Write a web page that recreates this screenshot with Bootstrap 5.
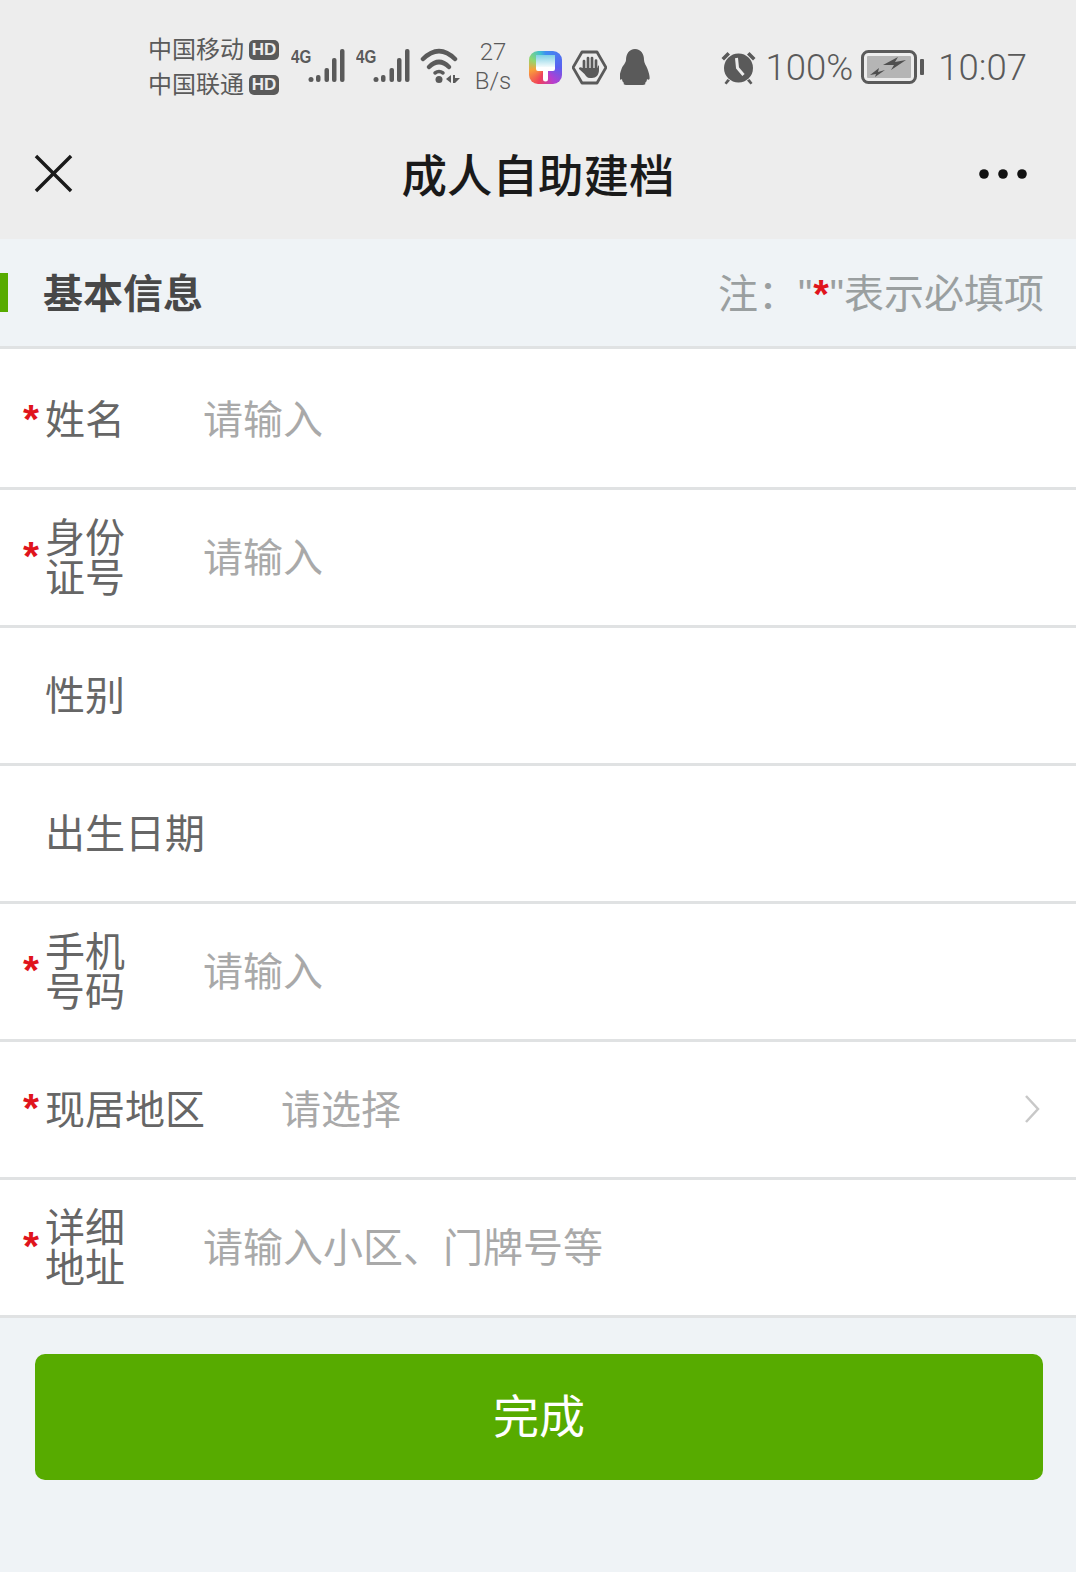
<!DOCTYPE html>
<html lang="zh-CN">
<head>
  <meta charset="UTF-8">
  <title>成人自助建档</title>
  <link href="https://cdn.jsdelivr.net/npm/bootstrap@5.3.0/dist/css/bootstrap.min.css" rel="stylesheet">
  <style>
    body { background: #eff3f6; font-family: "Liberation Sans", "Noto Sans CJK SC", sans-serif; width: 1076px; height: 1572px; overflow: hidden; }
    .top-area { background: #ededed; height: 239px; }
    .status-bar { height: 134px; padding: 0 49px 0 148px; color: #5a5a5a; }
    .carrier { font-size: 24px; line-height: 35px; width: 143px; flex-shrink: 0; }
    .carrier-row { gap: 5px; white-space: nowrap; }
    .hd-tag { background: #5a5a5a; color: #ededed; font-size: 17px; font-weight: 700; border-radius: 5px; width: 30px; height: 20px; }
    .signal-two { margin-left: 9px; }
    .wifi-icon { margin-left: 8px; }
    .speed { font-size: 24px; line-height: 29px; text-align: center; width: 50px; margin-left: 6px; font-family: Roboto, sans-serif; font-weight: 300; }
    .brush-icon { width: 33px; height: 33px; margin-left: 11px; border-radius: 9px; background: conic-gradient(from 0deg at 50% 50%, #3f8ff0 0deg, #5a5ff0 90deg, #b53fd0 150deg, #f0405a 205deg, #f9a03a 260deg, #8fd870 300deg, #3fc0d0 340deg, #3f8ff0 360deg); }
    .hand-icon { margin-left: 10px; }
    .qq-icon { margin-left: 13px; }
    .status-right { font-size: 36.5px; margin-left: auto; padding-top: 2px; font-family: Roboto, sans-serif; font-weight: 300; }
    .alarm-icon { margin: -2px 9px 0 0; }
    .battery-icon { margin: -2px 13px 0 8px; }
    .title-bar { height: 105px; padding: 0 48px 26px 34px; }
    .close-box { width: 64px; }
    .more-box { width: 50px; }
    .page-title { font-size: 45.5px; font-weight: 500; color: #1a1a1a; padding-top: 10px; }
    .section-head { height: 110px; border-bottom: 3px solid #e0e2e3; }
    .green-mark { width: 8px; height: 39px; background: #57ab00; }
    .section-title { font-size: 40px; font-weight: 700; color: #484848; margin-left: 35px; padding-top: 2px; }
    .section-note { font-size: 40px; color: #9a9fa0; margin-left: auto; margin-right: 32px; padding-top: 2px; }
    .red-star { color: #e0141c; font-weight: 700; margin: 0 1px; }
    .form-line { height: 138px; background: #fff; border-bottom: 3px solid #e0e2e3; padding-left: 23px; font-size: 40px; color: #666; }
    .form-line.first-line { height: 141px; padding-top: 4px; }
    .star-box { width: 22px; height: 41px; font-size: 41px; line-height: 1; color: #e0141c; font-weight: 700; margin-bottom: 2px; }
    .line-label { width: 158px; line-height: 40px; flex-shrink: 0; white-space: nowrap; }
    .line-label.wide-label { width: 236px; }
    .line-label.two-row { width: 80px; margin-right: 78px; white-space: normal; }
    .hint-text { color: #a9a9a9; }
    .chevron-icon { margin: 0 36px 2px 0; }
    .done-btn { background: #57ab00; border: 0; border-radius: 10px; color: #fff; font-size: 46px; height: 126px; width: 1008px; margin: 36px 0 0 35px; }
    .done-btn:hover { background: #57ab00; color: #fff; }
  </style>
</head>
<body>
  <div class="top-area">
    <div class="status-bar d-flex align-items-center">
      <div class="carrier">
        <div class="carrier-row d-flex align-items-center">中国移动<span class="hd-tag d-flex align-items-center justify-content-center">HD</span></div>
        <div class="carrier-row d-flex align-items-center">中国联通<span class="hd-tag d-flex align-items-center justify-content-center">HD</span></div>
      </div>
      <!-- signal 1 -->
      <svg width="56" height="44" viewBox="0 0 56 44" fill="#5a5a5a">
        <text transform="translate(0 18) scale(.8 1)" font-size="19" font-weight="700" font-family="Liberation Sans">4G</text>
        <circle cx="20" cy="34.500" r="2.500"/><rect x="25" y="30" width="4.500" height="7" rx="2"/><rect x="33.500" y="23" width="4.500" height="14" rx="2"/><rect x="41" y="13" width="4.500" height="24" rx="2"/><rect x="49" y="4" width="4.500" height="33" rx="2"/>
      </svg>
      <!-- signal 2 -->
      <svg width="56" height="44" class="signal-two" viewBox="0 0 56 44" fill="#5a5a5a">
        <text transform="translate(0 18) scale(.8 1)" font-size="19" font-weight="700" font-family="Liberation Sans">4G</text>
        <circle cx="20" cy="34.500" r="2.500"/><rect x="25" y="30" width="4.500" height="7" rx="2"/><rect x="33.500" y="23" width="4.500" height="14" rx="2"/><rect x="41" y="13" width="4.500" height="24" rx="2"/><rect x="49" y="4" width="4.500" height="33" rx="2"/>
      </svg>
      <!-- wifi -->
      <svg width="42" height="42" class="wifi-icon" viewBox="0 0 42 42" fill="none" stroke="#5a5a5a" stroke-width="4.500" stroke-linecap="round">
        <path d="M3 13Q19 -3 35 13"/><path d="M9 21Q19 11 29 21"/><path d="M15 27Q19 24 23 27" stroke-width="3.500"/>
        <circle cx="19" cy="33.500" r="3.500" fill="#5a5a5a" stroke="none"/>
        <path d="M26 33l5-4v8zM33 29h2v3h5l-5 5h-2z" fill="#5a5a5a" stroke="none"/>
      </svg>
      <div class="speed">27<br>B/s</div>
      <!-- paint brush app -->
      <div class="brush-icon flex-shrink-0">
        <svg width="33" height="33" class="d-block" viewBox="0 0 33 33">
          <defs><linearGradient id="brushHead" x1="0" y1="0" x2="0" y2="1"><stop offset="0" stop-color="#7fd0e4"/><stop offset="1" stop-color="#f4fbfc"/></linearGradient></defs>
          <path d="M7 4h19v12H7z" fill="url(#brushHead)"/>
          <path d="M7 16h19v2a2 2 0 0 1-2 2h-5v8a2.500 2.500 0 0 1-5 0v-8H9a2 2 0 0 1-2-2z" fill="#fff"/>
        </svg>
      </div>
      <!-- hand in hexagon -->
      <svg width="35" height="35" class="hand-icon flex-shrink-0" viewBox="0 0 35 35" fill="none" stroke="#5a5a5a" stroke-width="2.800">
        <path d="M10 2h15l9 15.500-9 15.500H10L1 17.500z" stroke-linejoin="round"/>
        <path d="M12 19V11M16 19V8M20 19V8M24 20V10.500" stroke-width="2.700" stroke-linecap="round"/>
        <path d="M10.500 18h15v-1l1.500-2v5c0 5-3 8-7 8h-2c-3 0-4-2-5.500-4L7 19c-.5-1.500 1.500-2.500 3.500-1z" fill="#5a5a5a" stroke="none"/>
      </svg>
      <!-- qq penguin -->
      <svg width="30" height="36" class="qq-icon flex-shrink-0" viewBox="0 0 30 36" fill="#5a5a5a">
        <path d="M15 0c6 0 9 5 9 11 0 3 2 5 3.500 9 1.500 4 2.500 8 2 10-.5 1-1.500 1-2.500 0 0 2-1 3-2 4 1 1 0 2-2 2H6c-2 0-3-1-2-2-1-1-2-2-2-4-1 1-2 1-2.500 0-.5-2 .5-6 2-10C3 16 6 14 6 11 6 5 9 0 15 0z"/>
      </svg>
      <div class="status-right d-flex align-items-center">
        <svg width="37" height="35" class="alarm-icon" viewBox="0 0 36 35" fill="#5a5a5a">
          <path d="M1 8 7 2l2.500 2.500-6 6zM35 8l-6-6-2.500 2.500 6 6zM7 29l-3 4 2 1.500 3.500-4zM29 29l3 4-2 1.500-3.500-4z"/>
          <circle cx="18" cy="18" r="14.500"/>
          <path d="M16 8l1 10 6 7" fill="none" stroke="#ededed" stroke-width="3"/>
        </svg>
        <span>100%</span>
        <svg width="64" height="34" class="battery-icon" viewBox="0 0 64 34" fill="none">
          <rect x="1.500" y="1.500" width="53" height="31" rx="6" stroke="#5a5a5a" stroke-width="3"/>
          <rect x="6" y="6" width="44" height="22" rx="1" fill="#b5b5b5"/>
          <path d="M22 15 37 7l-3 5 11-2-15 10 3-5z" fill="#4f4f4f"/>
          <path d="M9 25l9-7-1 4 7-2-10 7 1-3z" fill="#4f4f4f"/>
          <rect x="59" y="9" width="4" height="16" rx="1" fill="#5a5a5a"/>
        </svg>
        <span>10:07</span>
      </div>
    </div>
    <div class="title-bar d-flex align-items-center">
      <div class="close-box">
        <svg width="39" height="39" class="d-block" viewBox="0 0 40 40" stroke="#1a1a1a" stroke-width="3.500"><path d="M2 2 38 38M38 2 2 38"/></svg>
      </div>
      <div class="page-title flex-grow-1 text-center">成人自助建档</div>
      <div class="more-box">
        <svg width="50" height="12" class="d-block" viewBox="0 0 50 12" fill="#111"><circle cx="6" cy="6" r="4.800"/><circle cx="25" cy="6" r="4.800"/><circle cx="44" cy="6" r="4.800"/></svg>
      </div>
    </div>
  </div>

  <div class="section-head d-flex align-items-center">
    <div class="green-mark"></div>
    <div class="section-title">基本信息</div>
    <div class="section-note">注："<span class="red-star">*</span>"表示必填项</div>
  </div>

  <div class="form-line first-line d-flex align-items-center"><div class="star-box">*</div><div class="line-label">姓名</div><div class="hint-text">请输入</div></div>
  <div class="form-line d-flex align-items-center"><div class="star-box">*</div><div class="line-label two-row">身份证号</div><div class="hint-text">请输入</div></div>
  <div class="form-line d-flex align-items-center"><div class="star-box"></div><div class="line-label">性别</div></div>
  <div class="form-line d-flex align-items-center"><div class="star-box"></div><div class="line-label">出生日期</div></div>
  <div class="form-line d-flex align-items-center"><div class="star-box">*</div><div class="line-label two-row">手机号码</div><div class="hint-text">请输入</div></div>
  <div class="form-line d-flex align-items-center"><div class="star-box">*</div><div class="line-label wide-label">现居地区</div><div class="hint-text">请选择</div>
    <svg width="16" height="30" class="chevron-icon ms-auto" viewBox="0 0 16 30" fill="none" stroke="#c8c8c8" stroke-width="2.500"><path d="M2 2 14 15 2 28"/></svg>
  </div>
  <div class="form-line d-flex align-items-center"><div class="star-box">*</div><div class="line-label two-row">详细地址</div><div class="hint-text">请输入小区、门牌号等</div></div>

  <button class="btn done-btn d-block" type="button">完成</button>

  <script src="https://cdn.jsdelivr.net/npm/bootstrap@5.3.0/dist/js/bootstrap.bundle.min.js"></script>
</body>
</html>
